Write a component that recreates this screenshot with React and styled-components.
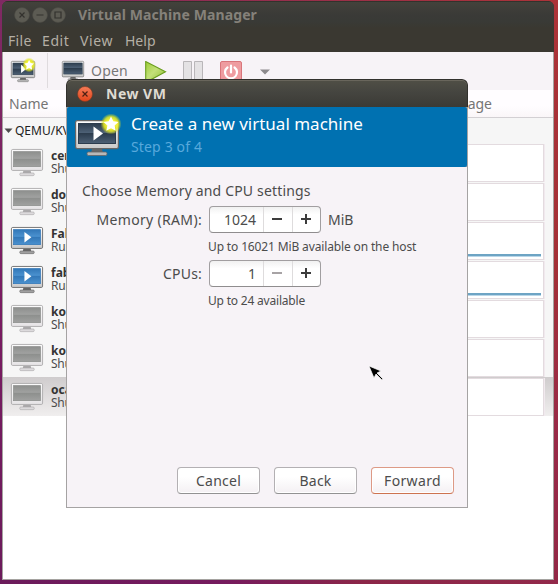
import React from "react";
import styled, { createGlobalStyle } from "styled-components";

const Global = createGlobalStyle`
  * { box-sizing: border-box; }
  html, body { margin: 0; width: 558px; height: 584px; overflow: hidden; }
  body { font-family: "Noto Sans", "Open Sans", sans-serif; font-size: 14px; color: #4c4c4c; }
`;

const Desktop = styled.div`
  width: 558px;
  height: 584px;
  padding: 1px 4px 4px 2px;
  background:
    linear-gradient(to right, #6b1b5b, #751a5e 40%, #8b2648 65%, #92294a) 0 580px / 558px 4px no-repeat,
    linear-gradient(to bottom, #ac3338, #a33036 45%, #982a48 75%, #922846) 554px 0 / 4px 584px no-repeat,
    linear-gradient(to right, #7f2a63, #9a3048 60%, #ac3338) 0 0 / 558px 8px no-repeat,
    linear-gradient(to bottom, #7f2a63, #7a1c62 50%, #6b1b5b);
`;

const Window = styled.div`
  position: relative;
  display: flex;
  flex-direction: column;
  height: 579px;
  border-radius: 6px 6px 0 0;
  overflow: hidden;
  background: #3a3831;
`;

const Text = styled.span`
  white-space: nowrap;
  font-size: ${(p) => p.$size || 14}px;
  font-weight: ${(p) => (p.$bold ? 700 : 400)};
  letter-spacing: ${(p) => p.$track || 0}px;
  color: ${(p) => p.$color || "#4c4c4c"};
  line-height: ${(p) => p.$line || 20}px;
`;

const TitleBar = styled.div`
  display: flex;
  align-items: center;
  gap: 2px;
  height: 27px;
  flex: none;
  padding: 0 0 0 12px;
  border-top: 1px solid #33322c;
  background: linear-gradient(#43423b, #3a3a37 50%, #393a36 75%, #3a3831);
`;

const TitleText = styled(Text)`
  margin-left: 10px;
`;

const MenuBar = styled.div`
  display: flex;
  align-items: center;
  height: 24px;
  flex: none;
  padding: 1px 0 0 6px;
  background: #3a3831;
`;

const MenuItem = styled(Text)`
  width: ${(p) => p.$width}px;
`;

const Body = styled.div`
  flex: 1;
  display: flex;
  flex-direction: column;
  border: solid #a5a3a0;
  border-width: 0 1px 1px;
  background: #fff;
`;

const Toolbar = styled.div`
  display: flex;
  align-items: flex-start;
  height: 38px;
  flex: none;
  padding: 9px 0 0 8px;
  background: #f7f3f7;
`;

const Separator = styled.div`
  width: 1px;
  height: 35px;
  margin: -8px 14px 0 12px;
  background: #dfdbde;
`;

const OpenLabel = styled(Text)`
  width: 61px;
  padding: 0 0 0 7px;
`;

const ColumnHeader = styled.div`
  display: flex;
  justify-content: space-between;
  height: 28px;
  flex: none;
  padding: 4px 61px 0 6px;
  border-bottom: 1px solid #d3d0d3;
  background: linear-gradient(#fffdff 60%, #faf6f8);
`;

const GroupRow = styled.div`
  display: flex;
  align-items: center;
  gap: 2px;
  height: 25px;
  flex: none;
  padding-left: 1px;
  background: #f6f6f6;
`;

const Row = styled.div`
  display: grid;
  grid-template-columns: 32px 1fr 180px;
  column-gap: 8px;
  height: 39px;
  flex: none;
  padding: 0 9px 0 8px;
  background: ${(p) => (p.$selected ? "linear-gradient(#cfcccd, #f0eeee)" : "#f6f6f6")};
`;

const IconCell = styled.div`
  padding-top: 6px;
`;

const Names = styled.div`
  display: flex;
  flex-direction: column;
  padding-top: 6px;
`;

const Graph = styled.div`
  height: 38px;
  margin-top: 1px;
  padding: 31px 2px 0 0;
  border: 1px solid #e3dbdf;
  background: #fff;
  box-shadow: 1px 0 0 #f1e9ee;
`;

const Load = styled.div`
  height: 3px;
  border-top: 2px solid #6da4c4;
  background: #b9d6e8;
`;

const Dialog = styled.div`
  position: absolute;
  left: 64px;
  top: 78px;
  width: 402px;
  height: 429px;
  display: flex;
  flex-direction: column;
  border-radius: 6px 6px 0 0;
  overflow: hidden;
  background: #a5a3a3;
`;

const DialogTitle = styled.div`
  display: flex;
  align-items: center;
  gap: 13px;
  height: 28px;
  flex: none;
  padding-left: 10px;
  border: 1px solid #32312d;
  border-bottom: 0;
  border-radius: 6px 6px 0 0;
  box-shadow: inset 0 1px #69665c;
  background: linear-gradient(#504f46, #454540 45%, #3b3a35);
`;

const Banner = styled.div`
  display: flex;
  align-items: flex-start;
  gap: 12px;
  height: 60px;
  flex: none;
  margin: 0 1px;
  padding: 6px 0 0 8px;
  border-radius: 2px;
  background: #0071b1;
`;

const BannerIcon = styled.div`
  padding-top: 7px;
`;

const BannerText = styled.div`
  display: flex;
  flex-direction: column;
`;

const Content = styled.div`
  flex: 1;
  display: flex;
  flex-direction: column;
  margin: 0 1px 1px;
  padding: 12px 13px 13px 0;
  background: #f7f3f7;
`;

const Heading = styled(Text)`
  margin: 0 0 3px 15px;
`;

const Form = styled.div`
  display: grid;
  grid-template-columns: 135px 112px auto;
  grid-template-rows: 27px 27px 27px 27px;
  column-gap: 7px;
  align-items: center;
`;

const FieldLabel = styled(Text)`
  text-align: right;
`;

const Hint = styled(Text)`
  grid-column: 2 / 4;
  margin-left: -1px;
`;

const Spinner = styled.div`
  display: grid;
  grid-template-columns: 53px 29px 28px;
  height: 27px;
  border: 1px solid #a19ea0;
  border-bottom-color: #8f8d8e;
  border-radius: 4px;
  background: linear-gradient(#f1f1f1, #fff 30%);
`;

const SpinValue = styled(Text)`
  text-align: right;
  padding: 3px 7px 0 0;
`;

const SpinButton = styled.div`
  display: flex;
  align-items: center;
  justify-content: center;
  border-left: 1px solid #dedcdd;
  padding: 0 2px 1px 0;
  color: ${(p) => (p.$disabled ? "#a7a3a5" : "#3c3c3c")};
`;

const Footer = styled.div`
  display: flex;
  justify-content: flex-end;
  gap: 14px;
  margin-top: auto;
`;

const Button = styled.div`
  display: flex;
  align-items: center;
  justify-content: center;
  width: 83px;
  height: 27px;
  padding-top: 1px;
  border: 1px solid ${(p) => (p.$primary ? "#dd9a86" : "#b3b0b3")};
  border-bottom-color: ${(p) => (p.$primary ? "#cd7350" : "#929292")};
  border-radius: 4px;
  background: linear-gradient(#fff 35%, #f4f0f3);
  box-shadow: inset 0 0 0 1px #fff;
`;

const Pointer = styled.svg`
  position: absolute;
  left: 366px;
  top: 364px;
`;

function WindowButton({ kind, active }) {
  const ink = active ? "#4d2013" : "#33322e";
  return (
    <svg width="16" height="16" viewBox="0 0 16 16" fill="none" stroke={ink}>
      <defs>
        <linearGradient id="closeFill" x1="0" y1="0" x2="0" y2="1">
          <stop offset="0" stopColor="#f67c58" />
          <stop offset="1" stopColor="#e1441a" />
        </linearGradient>
      </defs>
      <circle cx="8" cy="8" r="7.5" fill={active ? "url(#closeFill)" : "#5c5b53"} stroke={active ? "#7c3a22" : "#4b4a43"} strokeWidth=".6" />
      {kind === "close" && <path d="M5.5 5.5l5 5M10.5 5.5l-5 5" strokeWidth="1.2" />}
      {kind === "min" && <path d="M4.5 8h7" strokeWidth="1.1" />}
      {kind === "max" && <path d="M5 5h6v6h-6z" strokeWidth="1.2" />}
    </svg>
  );
}

const TONES = {
  dark: { screen: ["#2c3c4d", "#4d6075"], edge: "#666", foot: "#b8b8b8", frame: "frame" },
  blue: { screen: ["#3277b7", "#4a91cf"], edge: "#666", foot: "#a0a0a0", frame: "frame" },
  gray: { screen: ["#8d8f8d", "#a0a1a0"], edge: "#aaa9aa", foot: "#dcdadc", frame: "frame-pale" },
};

function Monitor({ tone, width, height, play, star }) {
  const { screen: [a, b], edge, foot, frame } = TONES[tone];
  return (
    <svg width={width} height={height} viewBox="0 0 44 36" preserveAspectRatio="none" overflow="visible" display="block">
      <defs>
        <linearGradient id={`screen-${tone}`} x1="0" y1="0" x2="0" y2="1">
          <stop offset="0" stopColor={a} /><stop offset=".45" stopColor={b} /><stop offset=".5" stopColor={a} /><stop offset="1" stopColor={b} />
        </linearGradient>
        <linearGradient id="frame" x1="0" y1="0" x2="0" y2="1">
          <stop offset="0" stopColor="#fff" /><stop offset="1" stopColor="#c9c9c9" />
        </linearGradient>
        <linearGradient id="frame-pale" x1="0" y1="0" x2="0" y2="1">
          <stop offset="0" stopColor="#fbfbfb" /><stop offset="1" stopColor="#e6e4e6" />
        </linearGradient>
        <radialGradient id="glow">
          <stop offset="0.4" stopColor="#f8f73c" /><stop offset=".7" stopColor="#e6e920" stopOpacity=".85" /><stop offset="1" stopColor="#d5dd20" stopOpacity="0" />
        </radialGradient>
      </defs>
      <path d="M17 29h10l1 4H16z" fill={edge} />
      <rect x="12" y="32" width="20" height="3.5" rx="1.5" fill={foot} stroke={edge} strokeWidth=".8" />
      <rect x=".6" y=".6" width="42.8" height="28" rx="1.8" fill={`url(#${frame})`} stroke={edge} strokeWidth="1.2" />
      <rect x="3.5" y="3.5" width="37" height="20" fill={`url(#screen-${tone})`} stroke={a} strokeWidth="1" />
      {play && <path d="M18.5 6.5v14L28 13.5z" fill="#fff" />}
      {star && (
        <g transform={star === "large" ? "translate(0 0)" : "translate(-10 2) scale(1.2)"}>
          <circle cx="36" cy="4" r="10.5" fill="url(#glow)" />
          <path d="M36-3.5l2.3 4.8 5.2.6-3.9 3.6 1.1 5.3L36 8.2l-4.700 2.600 1.100-5.300-3.900-3.600 5.200-.6z" fill="#fff" />
        </g>
      )}
    </svg>
  );
}

const ToolIcons = () => (
  <svg width="130" height="24" viewBox="0 0 130 24">
    <defs>
      <linearGradient id="go" x1="0" y1="0" x2="1" y2="1">
        <stop offset="0" stopColor="#9ccc35" /><stop offset=".45" stopColor="#c3e07a" /><stop offset="1" stopColor="#8abb2a" />
      </linearGradient>
    </defs>
    <path d="M.7.5v21L20.5 10.7z" fill="url(#go)" stroke="#6a9d1e" strokeWidth="1.1" />
    <path d="M38.500.5h8v22h-8zM49.500.5h8v22h-8z" fill="#e4e2e4" stroke="#b9b6b9" />
    <rect x="75.500" y=".5" width="21" height="22" rx="1.500" fill="#ee9ca0" stroke="#d9757b" />
    <path d="M82.500 6.500a6 6 0 1 0 7 0M86 4.500v7" fill="none" stroke="#fff" strokeWidth="2.200" strokeLinecap="round" />
    <path d="M115 8.500h10l-5 5z" fill="#8d8a8d" />
  </svg>
);

const SpinIcon = ({ plus }) => (
  <svg width="12" height="12" viewBox="0 0 12 12" fill="none" stroke="currentColor" strokeWidth="2">
    <path d={plus ? "M1 6h10M6 1v10" : "M1 6h10"} />
  </svg>
);

const machines = [
  { name: "cen", running: false },
  { name: "doc", running: false },
  { name: "Fab", running: true },
  { name: "fab", running: true },
  { name: "kol", running: false },
  { name: "kol", running: false },
  { name: "oca", running: false, selected: true },
];

function MachineRow({ name, running, selected }) {
  return (
    <Row $selected={selected}>
      <IconCell>
        <Monitor tone={running ? "blue" : "gray"} width={32} height={27} play={running} />
      </IconCell>
      <Names>
        <Text $size={12} $bold $line={13} $color="#333">{name}</Text>
        <Text $size={12} $line={13} $track={-0.3}>{running ? "Running" : "Shutoff"}</Text>
      </Names>
      <Graph>{running && <Load />}</Graph>
    </Row>
  );
}

function NumberField({ value, atMinimum }) {
  return (
    <Spinner>
      <SpinValue>{value}</SpinValue>
      <SpinButton $disabled={atMinimum}><SpinIcon /></SpinButton>
      <SpinButton><SpinIcon plus /></SpinButton>
    </Spinner>
  );
}

export default function App() {
  return (
    <Desktop>
      <Global />
      <Window>
        <TitleBar>
          <WindowButton kind="close" />
          <WindowButton kind="min" />
          <WindowButton kind="max" />
          <TitleText $bold $track={0.1} $color="#85817a">Virtual Machine Manager</TitleText>
        </TitleBar>
        <MenuBar>
          <MenuItem $width={34} $track={0.3} $color="#b4afa5">File</MenuItem>
          <MenuItem $width={38} $track={0.6} $color="#b4afa5">Edit</MenuItem>
          <MenuItem $width={45} $track={0.6} $color="#b4afa5">View</MenuItem>
          <MenuItem $width={40} $color="#b4afa5">Help</MenuItem>
        </MenuBar>
        <Body>
          <Toolbar>
            <Monitor tone="dark" width={24} height={21} play star="small" />
            <Separator />
            <Monitor tone="dark" width={22} height={20} />
            <OpenLabel $color="#777" $track={0.2}>Open</OpenLabel>
            <ToolIcons />
          </Toolbar>
          <ColumnHeader>
            <Text $color="#757575">Name</Text>
            <Text $color="#757575">CPU usage</Text>
          </ColumnHeader>
          <GroupRow>
            <svg width="9" height="6" viewBox="0 0 9 6"><path d="M.5.5h8l-4 4.500z" fill="#4c4c4c" /></svg>
            <Text $size={12} $color="#222">QEMU/KVM</Text>
          </GroupRow>
          {machines.map((m, i) => <MachineRow key={i} {...m} />)}
        </Body>

        <Dialog>
          <DialogTitle>
            <WindowButton kind="close" active />
            <Text $bold $track={0.5} $color="#dfdbd2">New VM</Text>
          </DialogTitle>
          <Banner>
            <BannerIcon>
              <Monitor tone="dark" width={44} height={36} play star="large" />
            </BannerIcon>
            <BannerText>
              <Text $size={17} $color="#fff" $line={22}>Create a new virtual machine</Text>
              <Text $color="#58a9dc" $line={23} $track={0.15}>Step 3 of 4</Text>
            </BannerText>
          </Banner>
          <Content>
            <Heading $line={24} $track={0.17}>Choose Memory and CPU settings</Heading>
            <Form>
              <FieldLabel $track={0.33}>Memory (RAM):</FieldLabel>
              <NumberField value="1024" />
              <Text>MiB</Text>
              <Hint $size={12} $track={-0.14}>Up to 16021 MiB available on the host</Hint>
              <FieldLabel $track={0.2}>CPUs:</FieldLabel>
              <NumberField value="1" atMinimum />
              <span />
              <Hint $size={12} $track={-0.2}>Up to 24 available</Hint>
            </Form>
            <Footer>
              <Button><Text $track={0.25}>Cancel</Text></Button>
              <Button><Text $track={0.25}>Back</Text></Button>
              <Button $primary><Text $track={0.35}>Forward</Text></Button>
            </Footer>
          </Content>
        </Dialog>

        <Pointer width="18" height="18" viewBox="0 0 18 18">
          <path d="M1 1l12 5-4 2 6 6-1 1-6-6-2 4z" fill="#000" stroke="#fff" strokeWidth=".7" />
        </Pointer>
      </Window>
    </Desktop>
  );
}
